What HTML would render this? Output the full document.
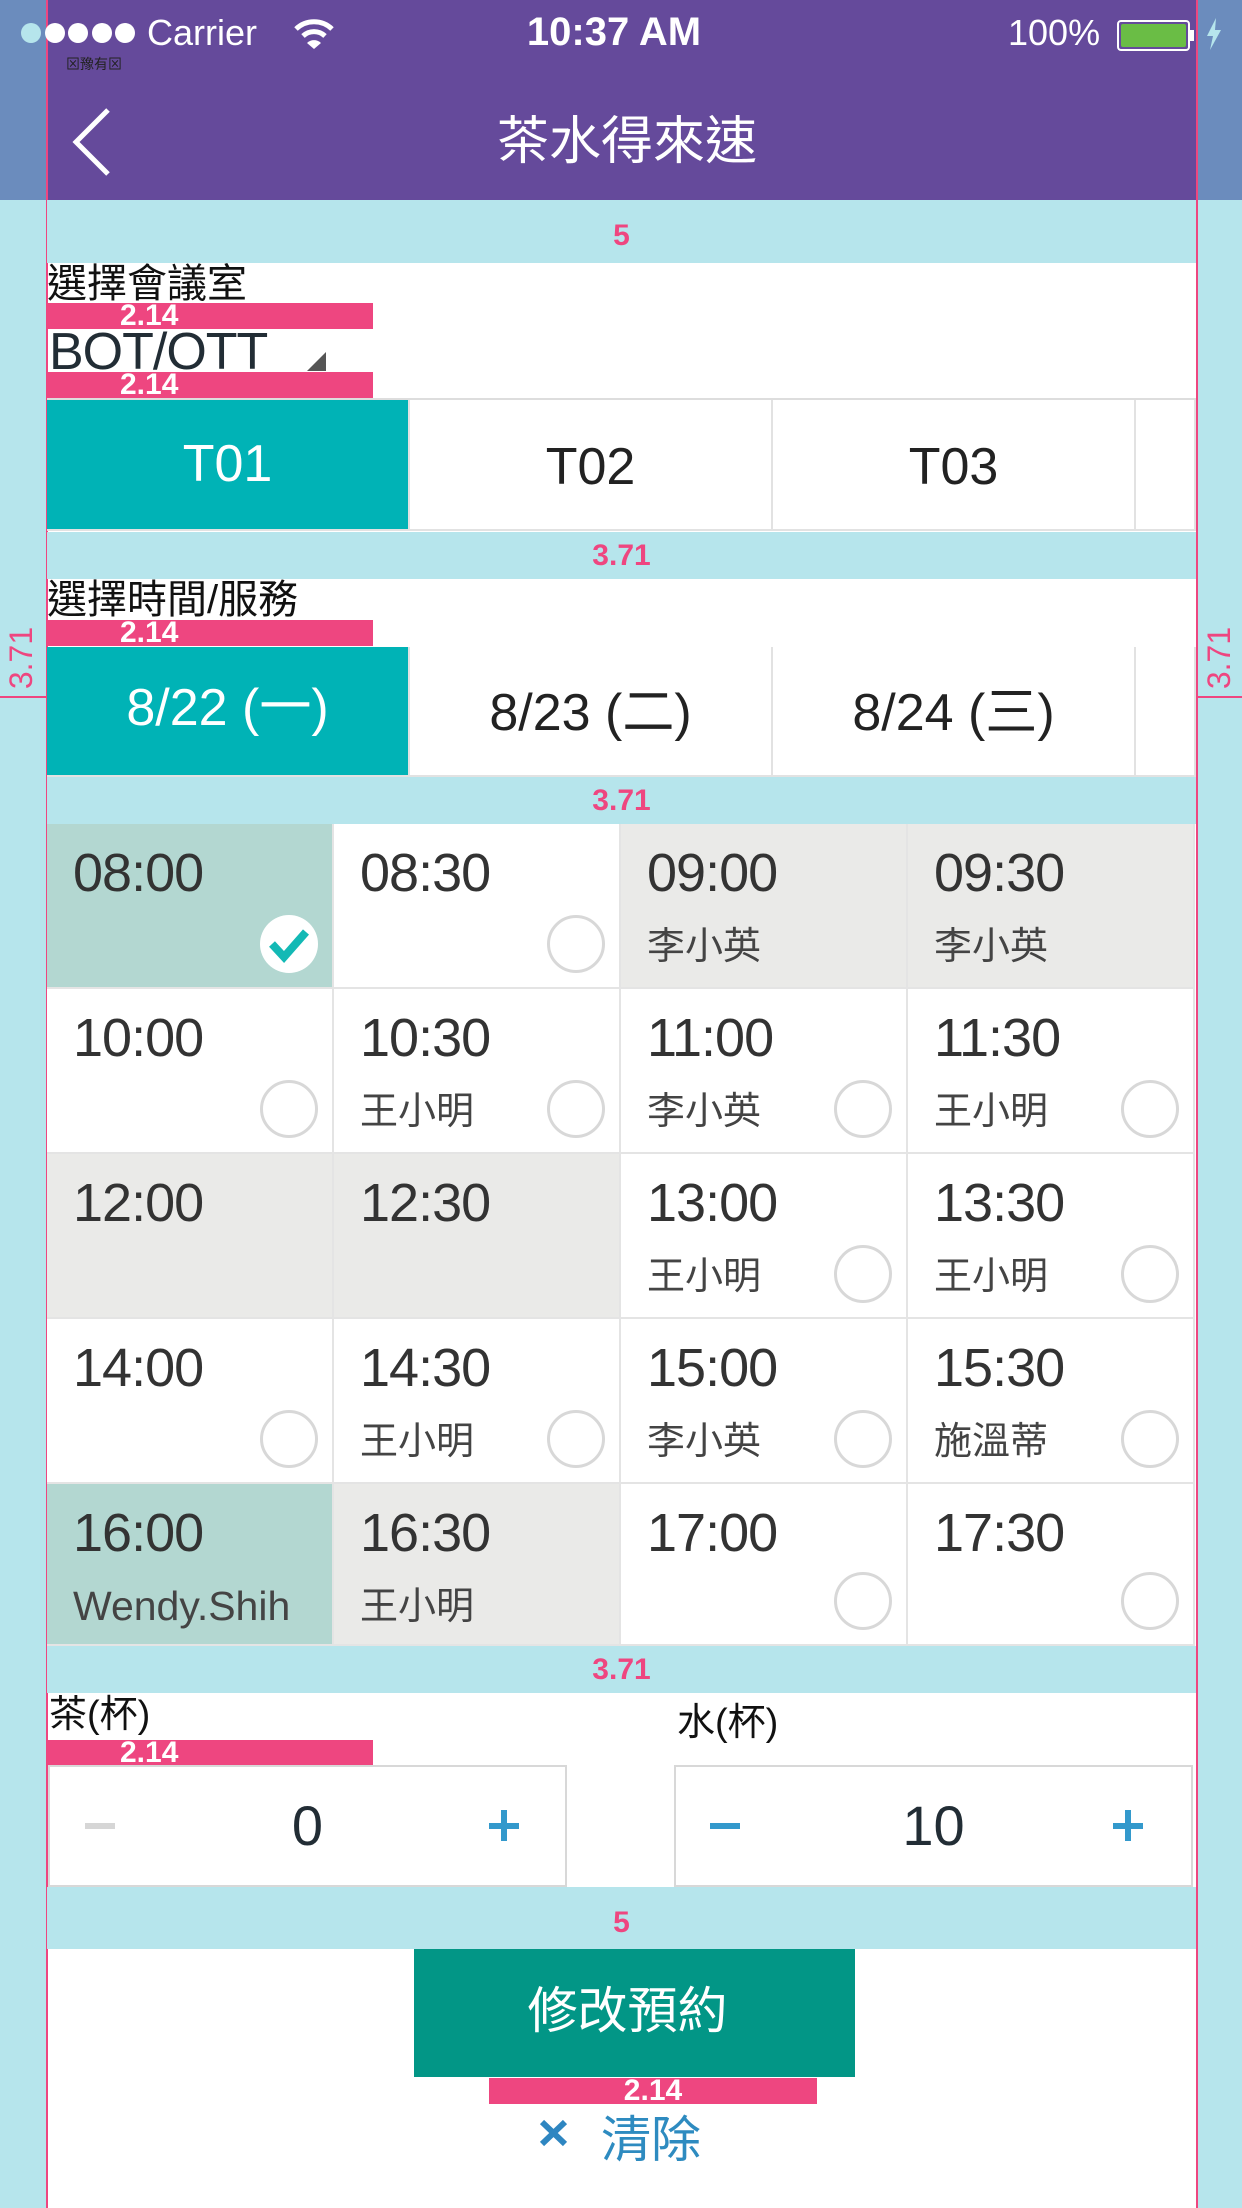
<!DOCTYPE html>
<html><head><meta charset="utf-8"><style>
*{margin:0;padding:0;box-sizing:border-box}
body{width:1242px;height:2208px;position:relative;overflow:hidden;background:#fff;font-family:"Liberation Sans","Noto Sans CJK TC",sans-serif;color:#333}
.a{position:absolute}
.lb{position:absolute;line-height:1;color:#111}
.band{position:absolute;left:47px;width:1149px;background:#b6e5ec;color:#ee4680;text-align:center;font-size:30px;font-weight:bold}
.pk{position:absolute;background:#ee4680;color:#fff;font-weight:bold;font-size:30px;line-height:26px}
.tab{position:absolute;height:131px;border-right:2px solid #e2e2e2;border-bottom:2px solid #e2e2e2;text-align:center;font-size:52px;color:#222}
.cell{position:absolute;width:287px;height:165px;border-right:2px solid #e4e4e4;border-bottom:2px solid #e4e4e4;background:#fff}
.cell .t{position:absolute;left:26px;top:18px;font-size:54px;color:#333;letter-spacing:-1px}
.cell .n{position:absolute;left:26px;top:104px;font-size:38px;line-height:1;color:#444}
.cell .c{position:absolute;right:14px;bottom:14px;width:58px;height:58px;border-radius:50%;border:3px solid #d8d8d8;background:#fff}
.g{background:#eaeae8!important}
.s{background:#b3d7d1!important}
</style></head><body>
<div class="a" style="left:0;top:0;width:1242px;height:200px;background:#654a9b"></div>
<div class="a" style="left:0;top:0;width:47px;height:200px;background:#6b8cbd"></div>
<div class="a" style="left:1197px;top:0;width:45px;height:200px;background:#6b8cbd"></div>
<div class="a" style="left:0;top:200px;width:47px;height:2008px;background:#b6e5ec"></div>
<div class="a" style="left:1197px;top:200px;width:45px;height:2008px;background:#b6e5ec"></div>
<div class="a" style="left:46px;top:0;width:2px;height:2208px;background:#ee4680"></div>
<div class="a" style="left:1196px;top:0;width:2px;height:2208px;background:#ee4680"></div>
<div class="a" style="left:21px;top:23px;width:20px;height:20px;border-radius:50%;background:#b6e5ec"></div>
<div class="a" style="left:45px;top:23px;width:20px;height:20px;border-radius:50%;background:#fff"></div>
<div class="a" style="left:68px;top:23px;width:20px;height:20px;border-radius:50%;background:#fff"></div>
<div class="a" style="left:92px;top:23px;width:20px;height:20px;border-radius:50%;background:#fff"></div>
<div class="a" style="left:115px;top:23px;width:20px;height:20px;border-radius:50%;background:#fff"></div>
<div class="a" style="left:147px;top:12px;font-size:36px;color:#fff">Carrier</div>
<svg class="a" style="left:293px;top:18px" width="42" height="32" viewBox="0 0 42 32"><path d="M3 11 A26 26 0 0 1 39 11" stroke="#fff" stroke-width="5" fill="none"/><path d="M10 18 A16 16 0 0 1 32 18" stroke="#fff" stroke-width="5" fill="none"/><path d="M14 25 L21 31 L28 25 A10 10 0 0 0 14 25Z" fill="#fff"/></svg>
<div class="a" style="left:66px;top:54px;font-size:14px;color:#222">⊠豫有⊠</div>
<div class="a" style="left:0;width:1228px;top:10px;text-align:center;font-size:40px;font-weight:bold;color:#fff">10:37 AM</div>
<div class="a" style="left:1008px;top:12px;font-size:36px;color:#fff">100%</div>
<div class="a" style="left:1117px;top:20px;width:73px;height:31px;border:2px solid #fff;border-radius:4px;padding:2px"><div style="width:100%;height:100%;background:#6abd45;border-radius:2px"></div></div>
<div class="a" style="left:1190px;top:30px;width:4px;height:11px;background:#fff"></div>
<svg class="a" style="left:1205px;top:18px" width="18" height="32" viewBox="0 0 18 32"><path d="M11 0 L2 18 L8 18 L5 32 L16 12 L10 12 Z" fill="#b6e5ec"/></svg>
<svg class="a" style="left:70px;top:106px" width="42" height="72" viewBox="0 0 42 72"><path d="M38 4 L6 36 L38 68" stroke="#fff" stroke-width="5" fill="none"/></svg>
<div class="a" style="left:0;width:1254px;top:112px;text-align:center;font-size:52px;line-height:60px;color:#fff">茶水得來速</div>
<div class="band" style="top:200px;height:63px;line-height:72px">5</div>
<div class="lb" style="left:47px;top:264px;font-size:40px">選擇會議室</div>
<div class="pk" style="left:47px;top:303px;width:326px;height:26px;padding-left:73px">2.14</div>
<div class="a" style="left:49px;top:322px;font-size:52px;color:#222d35;letter-spacing:-1px">BOT/OTT</div>
<svg class="a" style="left:307px;top:352px" width="19" height="19"><path d="M19 0 L19 19 L0 19Z" fill="#555"/></svg>
<div class="pk" style="left:47px;top:372px;width:326px;height:26px;padding-left:73px">2.14</div>
<div class="a" style="left:47px;top:398px;width:1149px;height:2px;background:#ddd"></div>
<div class="tab" style="left:47px;top:400px;width:363px;background:#00b3b6;color:#fff;line-height:128px">T01</div>
<div class="tab" style="left:410px;top:400px;width:363px;line-height:134px">T02</div>
<div class="tab" style="left:773px;top:400px;width:363px;line-height:134px">T03</div>
<div class="tab" style="left:1136px;top:400px;width:60px"></div>
<div class="band" style="top:532px;height:47px;line-height:48px">3.71</div>
<div class="lb" style="left:47px;top:580px;font-size:40px">選擇時間/服務</div>
<div class="pk" style="left:47px;top:620px;width:326px;height:26px;padding-left:73px">2.14</div>
<div class="a" style="left:0;top:696px;width:46px;height:2px;background:#ee4680"></div>
<div class="a" style="left:1198px;top:696px;width:44px;height:2px;background:#ee4680"></div>
<div class="a" style="left:-14px;top:640px;width:70px;height:36px;transform:rotate(-90deg);color:#ee4680;font-size:32px;text-align:center;line-height:36px">3.71</div>
<div class="a" style="left:1184px;top:640px;width:70px;height:36px;transform:rotate(-90deg);color:#ee4680;font-size:32px;text-align:center;line-height:36px">3.71</div>
<div class="tab" style="left:47px;top:647px;width:363px;height:130px;background:#00b3b6;color:#fff;line-height:122px">8/22 (一)</div>
<div class="tab" style="left:410px;top:647px;width:363px;height:130px;line-height:132px">8/23 (二)</div>
<div class="tab" style="left:773px;top:647px;width:363px;height:130px;line-height:132px">8/24 (三)</div>
<div class="tab" style="left:1136px;top:647px;width:60px;height:130px"></div>
<div class="band" style="top:777px;height:47px;line-height:48px">3.71</div>
<div class="cell s" style="left:47px;top:824px"><div class="t">08:00</div><div class="a" style="right:14px;bottom:14px;width:58px;height:58px;border-radius:50%;background:#fff"><svg width="58" height="58" viewBox="0 0 58 58"><path d="M12 29 L24 42 L46 17" stroke="#13b9b5" stroke-width="8" fill="none"/></svg></div></div>
<div class="cell" style="left:334px;top:824px"><div class="t">08:30</div><div class="c"></div></div>
<div class="cell g" style="left:621px;top:824px"><div class="t">09:00</div><div class="n">李小英</div></div>
<div class="cell g" style="left:908px;top:824px"><div class="t">09:30</div><div class="n">李小英</div></div>
<div class="cell" style="left:47px;top:989px"><div class="t">10:00</div><div class="c"></div></div>
<div class="cell" style="left:334px;top:989px"><div class="t">10:30</div><div class="n">王小明</div><div class="c"></div></div>
<div class="cell" style="left:621px;top:989px"><div class="t">11:00</div><div class="n">李小英</div><div class="c"></div></div>
<div class="cell" style="left:908px;top:989px"><div class="t">11:30</div><div class="n">王小明</div><div class="c"></div></div>
<div class="cell g" style="left:47px;top:1154px"><div class="t">12:00</div></div>
<div class="cell g" style="left:334px;top:1154px"><div class="t">12:30</div></div>
<div class="cell" style="left:621px;top:1154px"><div class="t">13:00</div><div class="n">王小明</div><div class="c"></div></div>
<div class="cell" style="left:908px;top:1154px"><div class="t">13:30</div><div class="n">王小明</div><div class="c"></div></div>
<div class="cell" style="left:47px;top:1319px"><div class="t">14:00</div><div class="c"></div></div>
<div class="cell" style="left:334px;top:1319px"><div class="t">14:30</div><div class="n">王小明</div><div class="c"></div></div>
<div class="cell" style="left:621px;top:1319px"><div class="t">15:00</div><div class="n">李小英</div><div class="c"></div></div>
<div class="cell" style="left:908px;top:1319px"><div class="t">15:30</div><div class="n">施溫蒂</div><div class="c"></div></div>
<div class="cell s" style="left:47px;top:1484px;height:162px"><div class="t">16:00</div><div class="n" style="font-size:41px;top:102px">Wendy.Shih</div></div>
<div class="cell g" style="left:334px;top:1484px;height:162px"><div class="t">16:30</div><div class="n">王小明</div></div>
<div class="cell" style="left:621px;top:1484px;height:162px"><div class="t">17:00</div><div class="c"></div></div>
<div class="cell" style="left:908px;top:1484px;height:162px"><div class="t">17:30</div><div class="c"></div></div>
<div class="band" style="top:1646px;height:47px;line-height:48px">3.71</div>
<div class="lb" style="left:49px;top:1696px;font-size:38px">茶(杯)</div>
<div class="lb" style="left:677px;top:1704px;font-size:38px">水(杯)</div>
<div class="pk" style="left:47px;top:1740px;width:326px;height:26px;padding-left:73px">2.14</div>
<div class="a" style="left:48px;top:1765px;width:519px;height:122px;border:2px solid #d8d8d8;background:#fff"></div>
<div class="a" style="left:85px;top:1823px;width:30px;height:6px;background:#d6d6d6"></div>
<div class="a" style="left:48px;width:519px;top:1793px;text-align:center;font-size:56px;color:#222d35">0</div>
<div class="a" style="left:489px;top:1823px;width:30px;height:6px;background:#3399cc"></div>
<div class="a" style="left:501px;top:1810px;width:6px;height:31px;background:#3399cc"></div>
<div class="a" style="left:674px;top:1765px;width:519px;height:122px;border:2px solid #d8d8d8;background:#fff"></div>
<div class="a" style="left:710px;top:1823px;width:30px;height:6px;background:#3399cc"></div>
<div class="a" style="left:674px;width:519px;top:1793px;text-align:center;font-size:56px;color:#222d35">10</div>
<div class="a" style="left:1113px;top:1823px;width:30px;height:6px;background:#3399cc"></div>
<div class="a" style="left:1125px;top:1810px;width:6px;height:31px;background:#3399cc"></div>
<div class="band" style="top:1887px;height:62px;line-height:72px">5</div>
<div class="a" style="left:414px;top:1949px;width:441px;height:128px;background:#029686;color:#fff;font-size:50px;text-align:center;line-height:124px;padding-right:14px">修改預約</div>
<div class="pk" style="left:489px;top:2078px;width:328px;height:26px;text-align:center">2.14</div>
<svg class="a" style="left:539px;top:2119px" width="29" height="28" viewBox="0 0 29 28"><path d="M3 3 L26 25 M26 3 L3 25" stroke="#2e86c1" stroke-width="6"/></svg>
<div class="a" style="left:601px;top:2100px;font-size:50px;color:#2e8bc0">清除</div>
</body></html>
